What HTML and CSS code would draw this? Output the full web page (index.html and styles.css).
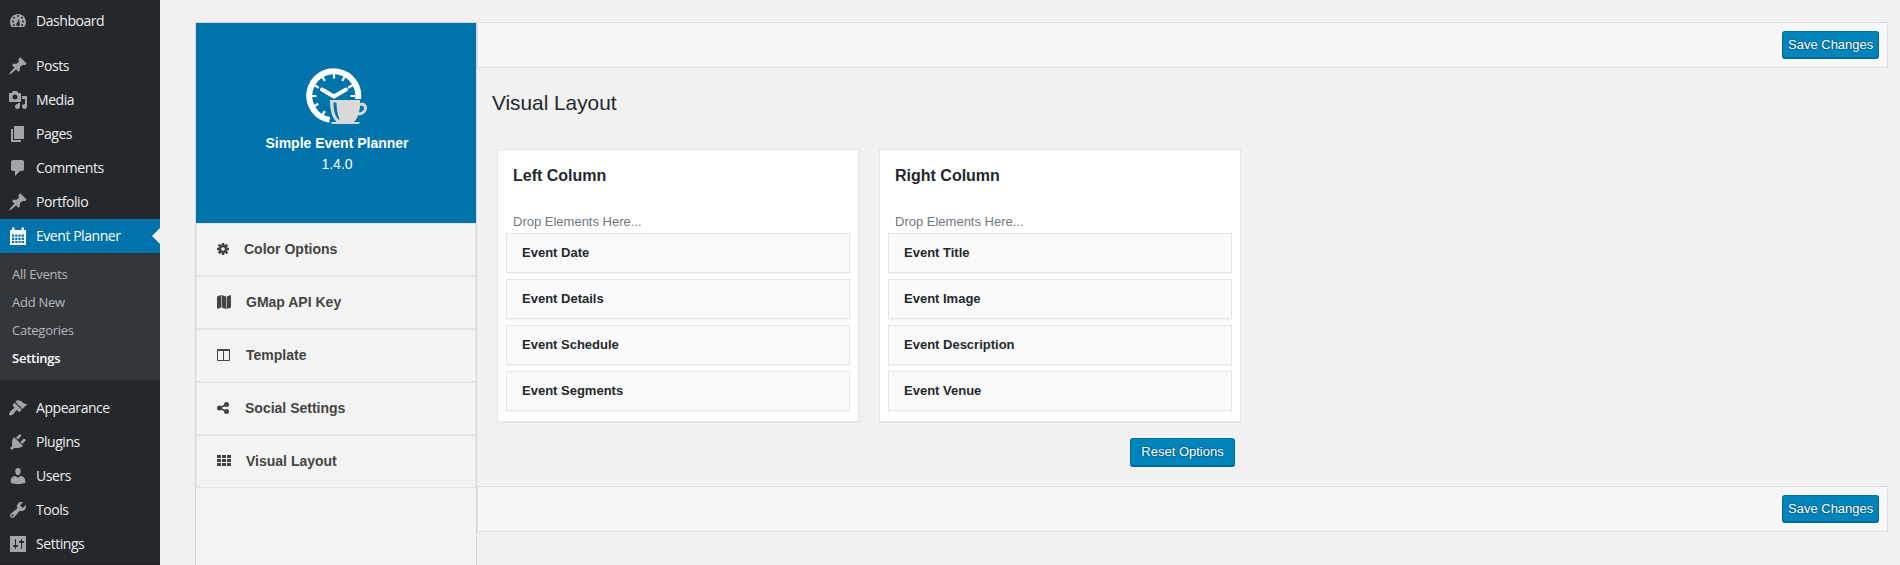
FILE: index.html
```html
<!DOCTYPE html>
<html lang="en">
<head>
<meta charset="utf-8">
<title>Simple Event Planner - Settings</title>
<link rel="stylesheet" href="styles.css">
</head>
<body>
<div class="admin">
  <nav class="menu">
    <a class="item"><svg class="dashicon" viewBox="0 0 20 20"><path fill-rule="evenodd" d="M3.76 16h12.48A7.95 7.95 0 0 0 18 11c0-4.42-3.58-8-8-8s-8 3.58-8 8c0 1.9.66 3.65 1.76 5zM10 4a1 1 0 1 1 0 2 1 1 0 0 1 0-2zM6 5.7a1 1 0 1 1 0 2 1 1 0 0 1 0-2zm8 0a1 1 0 1 1 0 2 1 1 0 0 1 0-2zM5 9.500a1 1 0 1 1 0 2 1 1 0 0 1 0-2zm10 0a1 1 0 1 1 0 2 1 1 0 0 1 0-2zM11 7.500l.7 5.200a1.800 1.800 0 1 1-2.500-.9zM5.800 13a1 1 0 1 1 0 2 1 1 0 0 1 0-2zm8.400 0a1 1 0 1 1 0 2 1 1 0 0 1 0-2z"/></svg>Dashboard</a>
    <div class="separator"></div>
    <a class="item"><svg class="dashicon" viewBox="0 0 20 20"><path d="M10.440 3.020l1.820-1.820 6.360 6.350-1.830 1.820c-1.050-.68-2.480-.57-3.410.36l-.75.75c-.92.93-1.040 2.350-.35 3.410l-1.830 1.820-2.410-2.410-2.800 2.790c-.42.42-3.380 2.710-3.800 2.290s1.860-3.390 2.280-3.810l2.790-2.790L4.100 9.360l1.830-1.820c1.050.69 2.480.57 3.400-.36l.75-.75c.93-.92 1.050-2.350.36-3.410z"/></svg>Posts</a>
    <a class="item"><svg class="dashicon" viewBox="0 0 20 20"><path d="M13 11V4c0-.55-.45-1-1-1h-1.670L9 1H5L3.670 3H2c-.55 0-1 .45-1 1v7c0 .55.45 1 1 1h10c.55 0 1-.45 1-1zM7 4.500c1.380 0 2.500 1.120 2.500 2.500S8.380 9.500 7 9.500 4.500 8.380 4.500 7 5.620 4.500 7 4.500zM14 6h5v10.500c0 1.380-1.120 2.500-2.500 2.500S14 17.880 14 16.500s1.120-2.500 2.500-2.500c.17 0 .34.020.5.050V9h-3V6zm-4 8.050V13h2v3.500c0 1.380-1.120 2.500-2.500 2.500S7 17.880 7 16.500 8.120 14 9.500 14c.17 0 .34.020.5.050z"/></svg>Media</a>
    <a class="item"><svg class="dashicon" viewBox="0 0 20 20"><path d="M6 15V2h10v13H6zm-1 1h8v2H3V5h2v11z"/></svg>Pages</a>
    <a class="item"><svg class="dashicon" viewBox="0 0 20 20"><path d="M5 2h9c1.100 0 2 .9 2 2v7c0 1.100-.9 2-2 2h-2l-5 5v-5H5c-1.100 0-2-.9-2-2V4c0-1.100.9-2 2-2z"/></svg>Comments</a>
    <a class="item"><svg class="dashicon" viewBox="0 0 20 20"><path d="M10.440 3.020l1.820-1.820 6.360 6.350-1.830 1.820c-1.050-.68-2.480-.57-3.410.36l-.75.75c-.92.93-1.040 2.350-.35 3.410l-1.830 1.820-2.410-2.410-2.800 2.790c-.42.42-3.380 2.710-3.800 2.290s1.860-3.390 2.280-3.810l2.790-2.790L4.100 9.360l1.830-1.820c1.050.69 2.480.57 3.400-.36l.75-.75c.93-.92 1.050-2.350.36-3.410z"/></svg>Portfolio</a>
    <a class="item current"><svg class="dashicon" viewBox="0 0 20 20"><path fill-rule="evenodd" d="M2 4h2V2.500a1 1 0 0 1 2.500 0V4h7V2.500a1 1 0 0 1 2.500 0V4h2v15H2zM4 8.500h2.200v2.200H4zM7.200 8.500h2.200v2.200H7.200zM10.400 8.500h2.200v2.200h-2.200zM13.600 8.500h2.400v2.200h-2.400zM4 11.700h2.200v2.200H4zM7.200 11.700h2.200v2.200H7.200zM10.400 11.700h2.200v2.200h-2.200zM13.600 11.700h2.400v2.200h-2.400zM4 14.900h2.200v2.200H4zM7.200 14.900h2.200v2.200H7.200zM10.400 14.900h2.200v2.200h-2.200zM13.600 14.900h2.400v2.200h-2.400z"/></svg>Event Planner</a>
    <div class="submenu">
      <a>All Events</a>
      <a>Add New</a>
      <a>Categories</a>
      <a class="active">Settings</a>
    </div>
    <div class="separator"></div>
    <a class="item"><svg class="dashicon" viewBox="0 0 20 20"><path d="M14.480 11.060L7.410 3.990l1.500-1.500c.5-.56 2.300-.47 3.510.32 1.210.8 1.430 1.280 2.910 2.100 1.180.64 2.450 1.260 4.450.85zm-.71.71L6.700 4.700 4.930 6.470c-.39.39-.39 1.020 0 1.410l1.060 1.060c.39.39.39 1.030 0 1.420-.6.6-1.430 1.110-2.210 1.690-.35.26-.7.53-1.010.84C1.430 14.230.4 16.080 1.400 17.070c.99 1 2.840-.03 4.180-1.360.31-.31.58-.66.85-1.020.57-.78 1.080-1.610 1.690-2.210.39-.39 1.020-.39 1.410 0l1.060 1.060c.39.39 1.020.39 1.410 0z"/></svg>Appearance</a>
    <a class="item"><svg class="dashicon" viewBox="0 0 20 20"><path d="M13.110 4.360L9.870 7.600 8 5.730l3.240-3.240c.35-.34 1.050-.2 1.560.32.52.51.66 1.210.31 1.550zm-8 1.770l.91-1.120 9.010 9.010-1.190.84c-.71.71-2.630 1.160-3.820 1.160H6.140L4.900 17.260c-.59.59-1.540.59-2.120 0-.59-.58-.59-1.530 0-2.120l1.240-1.240v-3.880c0-1.130.4-3.190 1.090-3.890zm7.260 3.970l3.240-3.240c.34-.35 1.040-.21 1.550.31.52.51.66 1.210.31 1.550l-3.240 3.250z"/></svg>Plugins</a>
    <a class="item"><svg class="dashicon" viewBox="0 0 20 20"><path d="M10 9.250c-2.270 0-2.730-3.440-2.730-3.440C7 4.020 7.820 2 9.970 2c2.160 0 2.980 2.020 2.710 3.810 0 0-.41 3.440-2.680 3.440zm0 2.570L12.720 10c2.390 0 4.520 2.330 4.520 4.530v2.490s-3.650 1.130-7.240 1.130c-3.650 0-7.240-1.130-7.240-1.130v-2.490c0-2.250 1.940-4.480 4.470-4.480z"/></svg>Users</a>
    <a class="item"><svg class="dashicon" viewBox="0 0 20 20"><path d="M16.680 9.770c-1.340 1.340-3.300 1.670-4.950.99l-5.410 6.520c-.99.99-2.590.99-3.580 0s-.99-2.590 0-3.570l6.520-5.420c-.68-1.650-.35-3.610.99-4.950 1.280-1.280 3.120-1.620 4.720-1.060l-2.890 2.890 2.820 2.820 2.860-2.870c.53 1.580.18 3.390-1.080 4.650zM3.810 16.210c.4.39 1.040.39 1.430 0 .4-.4.4-1.040 0-1.430-.39-.4-1.030-.4-1.430 0-.39.39-.39 1.030 0 1.430z"/></svg>Tools</a>
    <a class="item"><svg class="dashicon" viewBox="0 0 20 20"><path fill-rule="evenodd" d="M18 18V2H2v16zM8 11h1c.55 0 1 .45 1 1s-.45 1-1 1H8v1.500c0 .28-.22.5-.5.5s-.5-.22-.5-.5V13H6c-.55 0-1-.45-1-1s.45-1 1-1h1V5.500c0-.28.22-.5.5-.5s.5.22.5.5V11zm5-2h-1c-.55 0-1-.45-1-1s.45-1 1-1h1V5.500c0-.28.22-.5.5-.5s.5.22.5.5V7h1c.55 0 1 .45 1 1s-.45 1-1 1h-1v5.500c0 .28-.22.5-.5.5s-.5-.22-.5-.5V9z"/></svg>Settings</a>
  </nav>

  <aside class="panel">
    <header class="brand">
      <svg class="logo" viewBox="0 0 62 58">
        <path d="M23.600 51.900A24.500 24.500 0 1 1 51.900 32" fill="none" stroke="#fff" stroke-width="6"/>
        <path d="M28 5v5.500M16.500 9l2.300 3.900M38.500 9l-2.300 3.900M8 17l4.800 2.800M47 17l-4.800 2.800M6 28h4.500M49 28h-4.500M7.500 38.500l4.800-2.800M16.500 47l2.300-3.900" stroke="#fff" stroke-width="2.200" fill="none"/>
        <path d="M16 21.500l12 7 12-7" fill="none" stroke="#fff" stroke-width="4" stroke-linecap="round" stroke-linejoin="round"/>
        <path d="M22.500 31h35v3h4v16h-5l-5 7H29z" fill="#0073aa"/>
        <path fill-rule="evenodd" fill="#d9d9d9" d="M24 32h30v3c4-1 7 1 7 5s-4 7.500-9 7.500c-1 3-2.500 4.700-4 6.500h6c0 1.200-1 2-2.500 2h-24C26 56 25 55.200 25 54h5.500c-5-5-6.500-13-6.500-22zm3.500 2.500c0 7 1 12 4.500 17h1.500c-2-5-3-11-3-17zM54 38c-.2 2.500-.5 4.500-1 6.500 3-.3 5-2.200 5-4.200 0-2-1.500-2.800-4-2.300z"/>
      </svg>
      <strong>Simple Event Planner</strong>
      <span>1.4.0</span>
    </header>
    <a class="tab"><svg width="12" height="14" viewBox="0 0 12 14"><path fill="none" stroke="#444" stroke-width="2.600" d="M6 3.900a3.100 3.100 0 1 1 0 6.200 3.100 3.100 0 0 1 0-6.200z"/><path stroke="#444" stroke-width="2.500" d="M6 1v2.500M6 13v-2.500M0 7h2.500M12 7H9.500M1.700 2.700l1.800 1.800M10.300 11.300L8.500 9.500M10.300 2.700L8.500 4.500M1.700 11.300l1.800-1.800"/></svg>Color Options</a>
    <a class="tab"><svg width="14" height="14" viewBox="0 0 14 14"><path d="M0 1.500L4 0v12.500L0 14zM4.600 0L9.200 1.600V14L4.600 12.400zM9.800 1.600L14 0v12.400L9.800 14z"/></svg>GMap API Key</a>
    <a class="tab"><svg width="14" height="14" viewBox="0 0 14 14"><path fill-rule="evenodd" d="M1 1h11a1 1 0 0 1 1 1v10a1 1 0 0 1-1 1H1a1 1 0 0 1-1-1V2a1 1 0 0 1 1-1zm0 2v9h5V3zm6 0v9h5V3z"/></svg>Template</a>
    <a class="tab"><svg width="13" height="14" viewBox="0 0 13 14"><path d="M9.500 3.500L2.500 7l7 3.500" fill="none" stroke="#444" stroke-width="1.700"/><circle cx="2.500" cy="7" r="2.500"/><circle cx="9.500" cy="3.500" r="2.500"/><circle cx="9.500" cy="10.500" r="2.500"/></svg>Social Settings</a>
    <a class="tab"><svg width="14" height="14" viewBox="0 0 14 14"><path d="M0 1h4v3H0zM5 1h4v3H5zM10 1h4v3h-4zM0 5h4v3H0zM5 5h4v3H5zM10 5h4v3h-4zM0 9h4v3H0zM5 9h4v3H5zM10 9h4v3h-4z"/></svg>Visual Layout</a>
  </aside>

  <main class="main">
    <div class="bar"><button class="button">Save Changes</button></div>
    <section class="content">
      <h2>Visual Layout</h2>
      <div class="columns">
        <div class="card">
          <h3>Left Column</h3>
          <p>Drop Elements Here...</p>
          <div class="element">Event Date</div>
          <div class="element">Event Details</div>
          <div class="element">Event Schedule</div>
          <div class="element">Event Segments</div>
        </div>
        <div class="card">
          <h3>Right Column</h3>
          <p>Drop Elements Here...</p>
          <div class="element">Event Title</div>
          <div class="element">Event Image</div>
          <div class="element">Event Description</div>
          <div class="element">Event Venue</div>
        </div>
      </div>
      <div class="reset"><button class="button button-reset">Reset Options</button></div>
    </section>
    <div class="bar"><button class="button">Save Changes</button></div>
  </main>
</div>
</body>
</html>
```
FILE: styles.css
```css
* { box-sizing: border-box; }
body {
  margin: 0;
  height: 565px;
  overflow: hidden;
  background: #f1f1f1;
  color: #23282d;
  font: 13px/18px "Liberation Sans", Arial, sans-serif;
}
h2, h3, p { margin: 0; }
.admin { display: flex; height: 565px; }

.menu {
  flex: 0 0 160px;
  padding-top: 4px;
  border-bottom: 1px solid #2a1c24;
  background: #23282d;
  font-family: "Open Sans", "Noto Sans", sans-serif;
}
.item {
  position: relative;
  display: flex;
  align-items: center;
  gap: 8px;
  height: 34px;
  padding-left: 8px;
  color: #eee;
  font-size: 14px;
  letter-spacing: -0.45px;
}
.dashicon { width: 20px; height: 20px; fill: #a0a5aa; }
.separator { height: 11px; }
.current { background: #0073aa; color: #fff; }
.current .dashicon { fill: #fff; }
.current::after {
  content: "";
  position: absolute;
  right: 0;
  top: 9px;
  border: 8px solid transparent;
  border-left-width: 0;
  border-right-color: #f1f1f1;
}
.submenu { padding: 7px 0 8px 12px; background: #32373c; }
.submenu a {
  display: block;
  height: 28px;
  line-height: 28px;
  color: #b4b9be;
  font-size: 13px;
  letter-spacing: -0.25px;
}
.submenu .active { color: #fff; font-weight: 600; }

.panel {
  flex: 0 0 282px;
  height: 560px;
  margin: 22px 0 0 35px;
  border: 1px solid #d8d8d8;
  background: #f3f3f3;
}
.brand {
  display: flex;
  flex-direction: column;
  align-items: center;
  height: 200px;
  padding: 45px 0 0 2px;
  background: #0073aa;
  color: #fff;
  font-size: 14px;
  line-height: 21px;
}
.logo { width: 62px; height: 58px; margin-bottom: 7px; }
.tab {
  display: flex;
  align-items: center;
  gap: 15px;
  height: 53px;
  padding: 0 0 1px 20px;
  border: 1px solid #e5e5e5;
  color: #444;
  font-size: 14px;
  font-weight: 700;
}
.tab svg { fill: #444; }

.main { flex: 1; margin: 22px 12px 0 0; }
.bar {
  display: flex;
  justify-content: flex-end;
  height: 46px;
  padding: 8px 8px 0 0;
  border: 1px solid #ddd;
  background: #f7f7f7;
}
.button {
  height: 27px;
  padding: 0 5px 1px;
  width: 97px;
  border: 1px solid;
  border-color: #0073aa #006799 #006799;
  border-radius: 3px;
  background: #0085ba;
  box-shadow: 0 1px 0 #006799;
  color: #fff;
  font: 13px "Liberation Sans", Arial, sans-serif;
  text-shadow: 0 -1px 1px #006799, 1px 0 1px #006799, 0 1px 1px #006799, -1px 0 1px #006799;
  white-space: nowrap;
}
.button-reset { width: 105px; height: 28px; padding: 0 10px 1px; }
.content { height: 418px; padding: 21px 0 0 15px; }
h2 { font-size: 20.800px; font-weight: 400; line-height: 28px; }
.columns { display: flex; gap: 20px; margin: 32px 0 0 5px; }
.card {
  width: 362px;
  height: 273px;
  padding: 15px 8px 0;
  border: 1px solid #e5e5e5;
  background: #fff;
  box-shadow: 0 1px 1px rgba(0, 0, 0, .04);
}
.card h3 { padding-left: 7px; font-size: 16px; line-height: 22px; }
.card p { padding: 26px 0 2px 7px; color: #72777c; line-height: 18px; }
.element {
  height: 40px;
  margin-bottom: 6px;
  padding: 10px 15px;
  border: 1px solid #e5e5e5;
  background: #fafafa;
  box-shadow: 0 1px 1px rgba(0, 0, 0, .04);
  font-weight: 700;
}
.reset { display: flex; justify-content: flex-end; width: 743px; padding-top: 16px; }
```
